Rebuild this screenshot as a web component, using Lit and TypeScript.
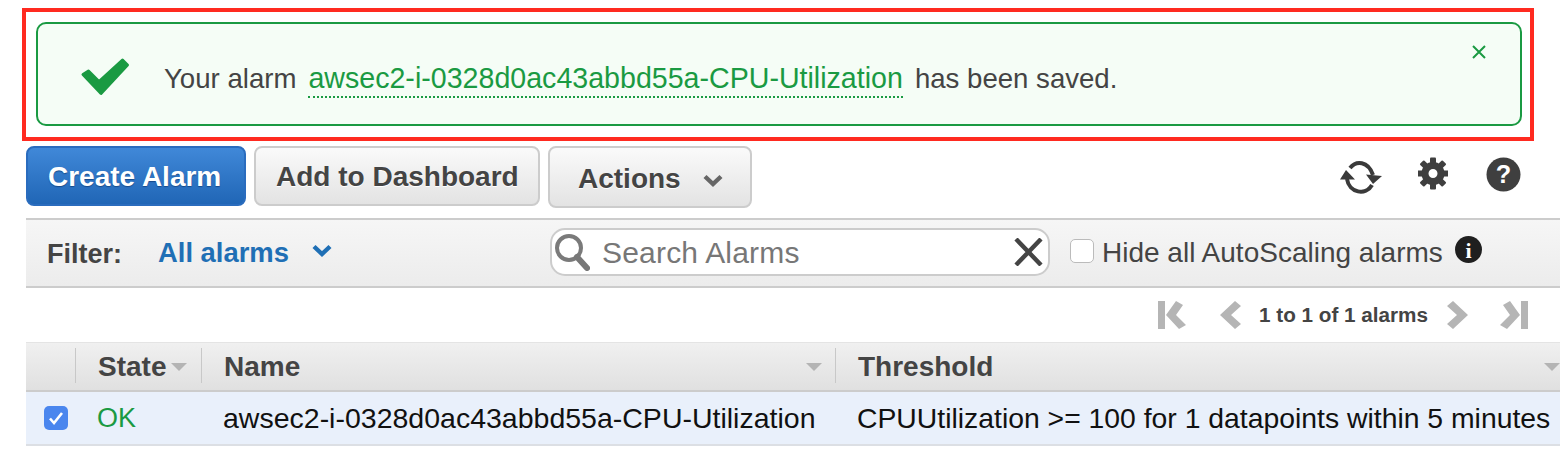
import { LitElement, css, html, svg } from 'lit'
import { customElement } from 'lit/decorators.js'

const chevron = (color: string) => html`
   <svg width="20" height="14" viewBox="0 0 20 14">
      <path d="M2 2.5 L10 10 L18 2.5" fill="none" stroke=${color} stroke-width="4.4" stroke-linejoin="miter" />
   </svg>`

const pagerArrow = (d: string) => html`
   <svg width="32" height="30" viewBox="0 0 32 30"><path d=${d} fill="#b5b5b5" /></svg>`

const sortArrow = (pos: string) => html`
   <svg style=${pos} width="16" height="8" viewBox="0 0 16 8"><path d="M0 0 H16 L8 8 Z" fill="#b4b4b4" /></svg>`

const gearTeeth = [0, 45, 90, 135, 180, 225, 270, 315]

@customElement('app-root')
export class AppRoot extends LitElement {

   static styles = css`
   :host {
      display: block;
      width: 1560px;
      height: 474px;
      overflow: hidden;
      background: #fff;
      font-family: "Liberation Sans", Arial, sans-serif;
      color: #444;
   }
   * {
      box-sizing: border-box;
   }
   .page {
      padding: 8px 0 0 26px;
      display: flex;
      flex-direction: column;
   }
   .frame {
      margin-left: -4px;
      width: 1512px;
      height: 133px;
      border: 4px solid #ff2a20;
      padding: 10px 8px 0 10px;
   }
   .alert {
      position: relative;
      height: 104px;
      border: 2px solid #1a9a42;
      border-radius: 10px;
      background: #f5fdf6;
      display: flex;
      align-items: center;
      padding-left: 42px;
      font-size: 27.6px;
   }
   .alert .check {
      margin: 4px 34px 0 0;
      flex: none;
   }
   .alert .msg {
      margin-top: 11px;
      display: flex;
      white-space: pre;
   }
   .alert a {
      color: #1a9a42;
      margin: 0 12px;
      padding-bottom: 1px;
      border-bottom: 2px dotted #1a9a42;
      line-height: 33px;
      font-size: 28.6px;
   }
   .alert .msg span {
      line-height: 33px;
   }
   .close {
      position: absolute;
      top: 21px;
      right: 34px;
      display: flex;
   }
   .toolbar {
      margin-top: 5px;
      display: flex;
      align-items: flex-start;
      gap: 8px;
   }
   .btn {
      height: 60px;
      border: 2px solid #ccc;
      border-radius: 8px;
      background: linear-gradient(#fafafa, #e3e3e3);
      font-size: 28px;
      font-weight: 700;
      color: #444;
      text-shadow: 0 1px 0 #fff;
      display: flex;
      align-items: center;
      white-space: nowrap;
      padding-top: 2px;
   }
   .btn.primary {
      width: 220px;
      padding-left: 20px;
      background: linear-gradient(#4088d8, #2066b6);
      border-color: #2a6cbe;
      color: #fff;
      text-shadow: 0 1px 1px #174a8a;
   }
   .btn.add {
      width: 286px;
      padding-left: 20px;
   }
   .btn.actions {
      width: 204px;
      height: 62px;
      padding: 4px 0 0 28px;
      gap: 22px;
   }
   .btn.actions svg {
      margin-top: 4px;
   }
   .tools {
      margin-left: auto;
      width: 228px;
      display: flex;
      align-items: flex-start;
      padding: 11px 0 0 8px;
   }
   .tools svg {
      display: block;
      flex: none;
   }
   .tools .sync {
      margin: 3px 36px 0 0;
   }
   .tools .gear {
      margin-right: 38px;
   }
   .filter {
      margin-top: 10px;
      height: 70px;
      border-top: 2px solid #ccc;
      border-bottom: 2px solid #ccc;
      background: linear-gradient(#f6f6f6, #ececec);
      display: flex;
      align-items: center;
      padding-left: 21px;
      font-size: 27px;
   }
   .filter b {
      width: 111px;
      padding-top: 3px;
   }
   .filter .all {
      color: #1f6fb5;
      font-weight: 700;
      font-size: 27.4px;
      width: 131px;
      white-space: nowrap;
   }
   .filter .caret {
      margin: 0 0 4px 23px;
      display: flex;
   }
   .search {
      margin-left: 218px;
      width: 500px;
      height: 48px;
      margin-top: -3px;
      border: 2px solid #ccc;
      border-radius: 15px;
      background: #fff;
      display: flex;
      align-items: center;
      padding: 0 5px 0 2px;
      color: #777;
   }
   .search span {
      margin: 2px 0 0 12px;
      flex: 1;
      font-size: 30px;
      letter-spacing: 0.2px;
   }
   .hide {
      margin-left: 20px;
      display: flex;
      align-items: center;
      margin-top: -4px;
      white-space: nowrap;
      font-size: 28px;
   }
   .hide .label {
      padding-top: 3px;
   }
   .box {
      width: 24px;
      height: 24px;
      border: 1.5px solid #bbb;
      border-radius: 5px;
      background: #fff;
      margin-right: 8px;
   }
   .hide svg {
      margin: -4px 0 0 12px;
   }
   .pager {
      height: 54px;
      display: flex;
      align-items: center;
      justify-content: flex-end;
      padding-right: 29px;
      font-size: 20.7px;
      font-weight: 700;
   }
   .pager span {
      margin: 0 14px 0 13px;
      white-space: nowrap;
   }
   .pager svg {
      display: block;
   }
   .pager .first {
      margin-right: 27px;
   }
   .pager .last {
      margin-left: 25px;
   }
   .table {
      display: grid;
      grid-template-columns: 50px 126px 634px 1fr;
   }
   .head {
      height: 50px;
      border-top: 1px solid #e4e4e4;
      border-bottom: 2px solid #ccc;
      background: linear-gradient(#f0f0f0, #e0e0e0);
      display: flex;
      align-items: center;
      font-size: 28px;
      font-weight: 700;
      position: relative;
      white-space: nowrap;
   }
   .head.sep::after {
      content: "";
      position: absolute;
      right: -3px;
      top: 5px;
      bottom: 7px;
      width: 3px;
      background: #fff;
      border-left: 1px solid #c8c8c8;
   }
   .head svg {
      position: absolute;
      top: 20px;
   }
   .cell {
      height: 54px;
      background: #e9f0fb;
      border-bottom: 2px solid #dcdfe4;
      display: flex;
      align-items: center;
      font-size: 28.5px;
      color: #111;
      white-space: nowrap;
   }
   .cell.ok {
      color: #1a9a42;
      font-size: 27px;
   }
   .cell.threshold {
      font-size: 28.35px;
   }
   .cell.state {
      padding-left: 21px;
   }
   .head.pad {
      padding-left: 22px;
   }
   .tick {
      width: 24px;
      height: 24px;
      margin-left: 18px;
      border-radius: 5px;
      background: #4a86ee;
      display: flex;
      align-items: center;
      justify-content: center;
   }
   `

   render() {
      return html`
         <div class="page">
            <div class="frame">
               <div class="alert">
                  <svg class="check" width="50" height="40" viewBox="0 0 50 40">
                     <path d="M3 18.500 L8.500 15 L19 25.500 L42.500 4 L47.500 9 L21 37.500 Z" fill="#1a9a42" stroke="#1a9a42" stroke-width="3" stroke-linejoin="round" />
                  </svg>
                  <div class="msg">
                     <span>Your alarm</span><a>awsec2-i-0328d0ac43abbd55a-CPU-Utilization</a><span>has been saved.</span>
                  </div>
                  <div class="close">
                     <svg width="14" height="14" viewBox="0 0 14 14">
                        <path d="M1 1 L13 13 M13 1 L1 13" stroke="#1a9a42" stroke-width="2" />
                     </svg>
                  </div>
               </div>
            </div>

            <div class="toolbar">
               <div class="btn primary">Create Alarm</div>
               <div class="btn add">Add to Dashboard</div>
               <div class="btn actions">Actions ${chevron('#666')}</div>
               <div class="tools">
                  <svg class="sync" width="42" height="34" viewBox="0 0 42 34">
                     <path d="M10 8 C16 0.500 28 0.500 33 15" fill="none" stroke="#3a3a3a" stroke-width="4" />
                     <path d="M7 19 C9 33 26 36 32 25" fill="none" stroke="#3a3a3a" stroke-width="4" />
                     <path d="M0 19.500 L6 10 L15 19.500 Z M26 14.500 L42 16 L33 24 Z" fill="#3a3a3a" />
                  </svg>
                  <svg class="gear" width="30" height="33" viewBox="0 0 30 33">
                     <circle cx="15" cy="16.500" r="8" fill="none" stroke="#3f3f3f" stroke-width="7" />
                     ${gearTeeth.map(a => svg`<rect x="12" y="0.500" width="6" height="6" rx="1" fill="#3f3f3f" transform="rotate(${a} 15 16.500)" />`)}
                  </svg>
                  <svg width="35" height="35" viewBox="0 0 36 36">
                     <circle cx="18" cy="18" r="17.500" fill="#3f3f3f" />
                     <text x="18" y="27" text-anchor="middle" font-size="26" font-weight="700" fill="#fff" font-family="Liberation Sans">?</text>
                  </svg>
               </div>
            </div>

            <div class="filter">
               <b>Filter:</b>
               <div class="all">All alarms</div>
               <div class="caret">${chevron('#1f6fb5')}</div>
               <div class="search">
                  <svg width="36" height="38" viewBox="0 0 36 38">
                     <circle cx="15" cy="15" r="12" fill="none" stroke="#7a7a7a" stroke-width="4" />
                     <path d="M23 24 L33 35" stroke="#777" stroke-width="6" stroke-linecap="round" />
                  </svg>
                  <span>Search Alarms</span>
                  <svg width="30" height="28" viewBox="0 0 30 28">
                     <path d="M3 1 L28 27 M28 1 L3 27" stroke="#444" stroke-width="4.400" />
                  </svg>
               </div>
               <div class="hide">
                  <div class="box"></div>
                  <div class="label">Hide all AutoScaling alarms</div>
                  <svg width="27" height="27" viewBox="0 0 27 27">
                     <circle cx="13.500" cy="13.500" r="13.500" fill="#1f1f1f" />
                     <text x="13.500" y="22" text-anchor="middle" font-size="22" font-weight="700" fill="#fff" font-family="Liberation Serif">i</text>
                  </svg>
               </div>
            </div>

            <div class="pager">
               <div class="first">${pagerArrow('M3 1 H10 V29 H3 Z M21 1 L28 5 L21 15 L31 25 L24 29 L11 15 Z')}</div>
               ${pagerArrow('M21 1 L27 6 L17 15 L27 24 L21 29 L6 15 Z')}
               <span>1 to 1 of 1 alarms</span>
               ${pagerArrow('M11 1 L5 6 L15 15 L5 24 L11 29 L26 15 Z')}
               <div class="last">${pagerArrow('M29 1 H22 V29 H29 Z M11 1 L4 5 L11 15 L1 25 L8 29 L21 15 Z')}</div>
            </div>

            <div class="table">
               <div class="head sep"></div>
               <div class="head sep pad">State${sortArrow('left:95px')}</div>
               <div class="head sep pad">Name${sortArrow('right:14px')}</div>
               <div class="head pad">Threshold${sortArrow('right:0')}</div>

               <div class="cell">
                  <div class="tick">
                     <svg width="16" height="14" viewBox="0 0 16 14"><path d="M2 7.500 L6 12 L14 2" fill="none" stroke="#fff" stroke-width="2.600" /></svg>
                  </div>
               </div>
               <div class="cell ok state">OK</div>
               <div class="cell state">awsec2-i-0328d0ac43abbd55a-CPU-Utilization</div>
               <div class="cell state threshold">CPUUtilization &gt;= 100 for 1 datapoints within 5 minutes</div>
            </div>
         </div>
      `
   }
}
